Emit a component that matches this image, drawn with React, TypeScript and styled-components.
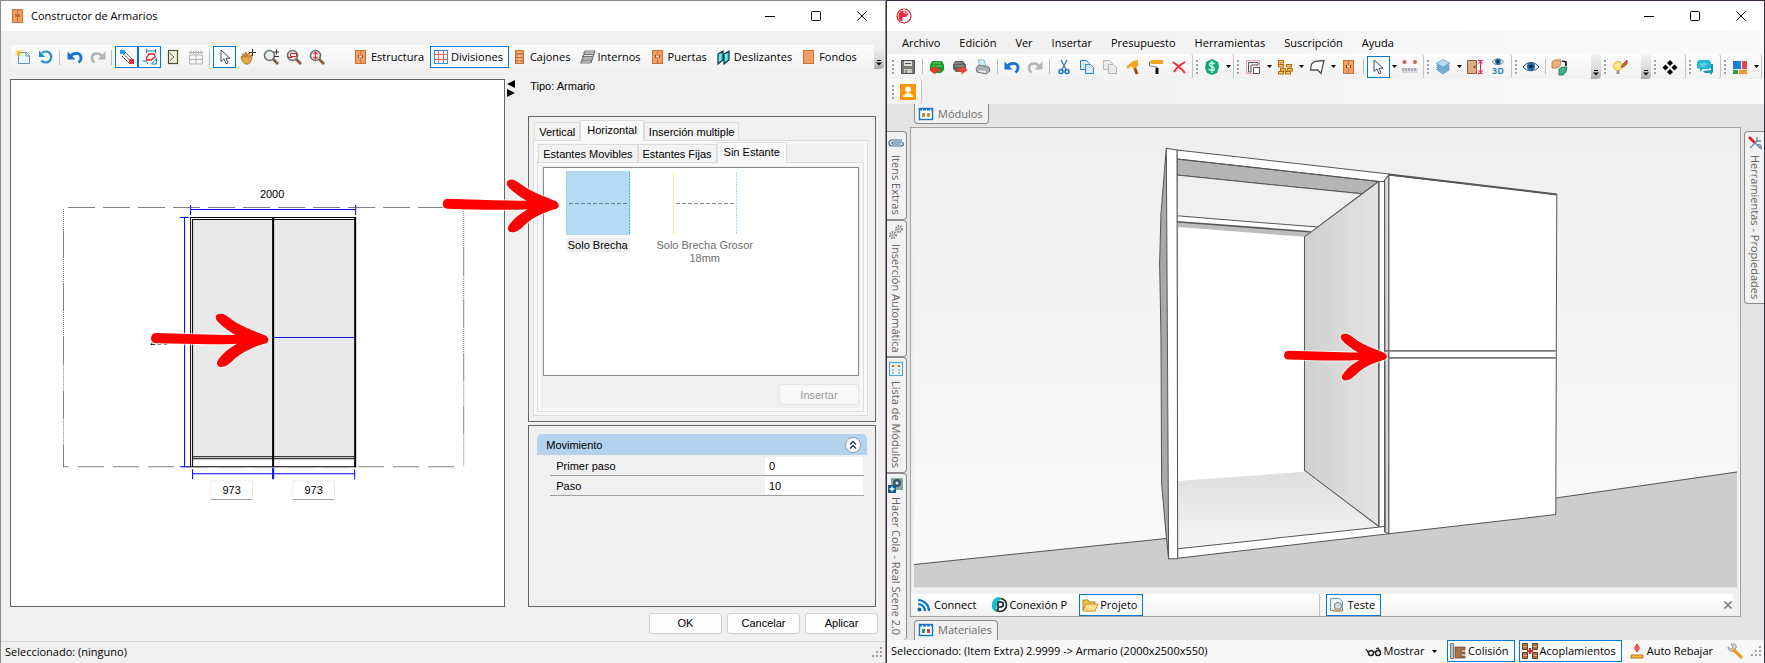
import React from 'react';
import styled, { createGlobalStyle, css } from 'styled-components';

const ui = '"Open Sans", "Noto Sans", sans-serif';
const classic = '"Liberation Sans", Arial, sans-serif';

const GlobalStyle = createGlobalStyle`
  * { box-sizing: border-box; }
  body { margin: 0; background: #f0f0f0; color: #000; font: 11px/14px ${ui}; }
  button, input { font: inherit; color: inherit; margin: 0; padding: 0; }
  svg { display: block; flex: none; }
`;

/* ---------- windows ---------- */

const Desktop = styled.div`
  display: flex;
  min-height: 100vh;
`;

const Window = styled.section<{ $grow: number; $edge: string }>`
  flex: ${(p) => p.$grow} 1 0;
  min-width: 0;
  display: flex;
  flex-direction: column;
  border: 1px solid ${(p) => p.$edge};
  background: #f0f0f0;
`;

const TitleBar = styled.header`
  display: flex;
  align-items: center;
  height: 30px;
  flex: none;
  padding-left: 11px;
  background: #fff;
`;

const Title = styled.h1`
  margin: 0 0 0 6px;
  flex: 1;
  font-size: 11px;
  font-weight: 400;
`;

const Caption = styled.button`
  width: 46px;
  height: 28px;
  border: 0;
  background: none;
  display: grid;
  place-items: center;
`;

const StatusBar = styled.footer`
  display: flex;
  align-items: center;
  height: 22px;
  flex: none;
  padding: 0 2px 0 4px;
`;

/* ---------- toolbars ---------- */

const toolButton = css<{ $on?: boolean }>`
  display: flex;
  align-items: center;
  height: 22px;
  border: 1px solid ${(p) => (p.$on ? '#0078d7' : 'transparent')};
  background: ${(p) => (p.$on ? '#fbfcfd' : 'none')};
`;

const IconButton = styled.button<{ $on?: boolean }>`
  ${toolButton}
  justify-content: center;
  width: 23px;
  flex: none;
`;

const TextButton = styled.button<{ $on?: boolean; $strong?: boolean }>`
  ${toolButton}
  gap: 2px;
  padding: 0 5px 0 2px;
  white-space: nowrap;
  font-weight: ${(p) => (p.$strong ? 500 : 400)};
`;

const CaretButton = styled.button`
  width: 9px;
  height: 22px;
  flex: none;
  border: 0;
  background: none;
  display: grid;
  place-items: center;
`;

const Separator = styled.span`
  width: 6px;
  height: 15px;
  flex: none;
  border-right: 1px solid #bdbdbd;
  margin-right: 3px;
  margin-left: -3px;
`;

const OverflowButton = styled.button`
  align-self: stretch;
  width: 10px;
  flex: none;
  margin-left: auto;
  border: 0;
  border-radius: 0 3px 4px 0;
  background: linear-gradient(#f4f4f4, #d9d9d9 60%, #a9a9a9);
  display: flex;
  align-items: flex-end;
  justify-content: center;
  padding-bottom: 3px;
`;

const BuilderToolbar = styled.nav`
  display: flex;
  align-items: center;
  height: 24px;
  flex: none;
  margin: 14px 1px 10px 10px;
  border-radius: 2px 4px 4px 2px;
  background: linear-gradient(#fcfcfc, #f2f2f2);
`;

const ToolGap = styled.span`
  width: 22px;
  flex: none;
`;

/* ---------- builder window ---------- */

const Workspace = styled.div`
  flex: 1;
  display: flex;
  padding: 0 8px 0 9px;
`;

const Canvas = styled.div`
  flex: 495 1 0;
  min-width: 0;
  border: 1px solid #646464;
  background: #fff;
  display: grid;
  place-items: center;
`;

const Plan = styled.svg`
  width: 100%;
  height: auto;
  font: 11px ${classic};
`;

const SizeInput = styled.input`
  width: 43px;
  height: 20px;
  display: block;
  border: 1px solid #e6e6e6;
  border-bottom-color: #868686;
  border-radius: 2px;
  background: #fff;
  text-align: center;
  font: 11px/16px ${classic};
`;

const Splitter = styled.div`
  width: 23px;
  flex: none;
  padding: 1px 0 0 2px;
`;

const Side = styled.div`
  flex: 350 1 0;
  min-width: 0;
  display: flex;
  flex-direction: column;
  font: 11px/14px ${classic};
`;

const TypeLabel = styled.div`
  height: 37px;
  padding-left: 2px;
`;

const Panel = styled.section<{ $fill?: boolean }>`
  margin: 0 1px 3px 0;
  border: 1px solid #646464;
  padding: ${(p) => (p.$fill ? '8px' : '3px 7px 5px 4px')};
  ${(p) => p.$fill && 'flex: 1; margin-bottom: 0;'}
`;

const Tabs = styled.div`
  display: flex;
  align-items: flex-end;
  height: 20px;
  padding-left: 1px;
`;

const Tab = styled.button<{ $on?: boolean }>`
  height: ${(p) => (p.$on ? 21 : 18)}px;
  margin-bottom: ${(p) => (p.$on ? -1 : 0)}px;
  padding: 0 ${(p) => (p.$on ? 6 : 4)}px ${(p) => (p.$on ? 3 : 0)}px;
  border: 1px solid #dcdcdc;
  border-bottom: 0;
  background: ${(p) => (p.$on ? '#f9f9f9' : '#f2f2f2')};
  white-space: nowrap;
  position: relative;
`;

const Page = styled.div<{ $inner?: boolean }>`
  border: 1px solid #dcdcdc;
  box-shadow: inset 0 0 0 3px #f9f9f9;
  padding: ${(p) => (p.$inner ? '4px 4px 6px 5px' : '1px 3px 3px')};
`;

const ListBox = styled.ul`
  list-style: none;
  margin: 0;
  padding: 3px 0 0;
  height: 209px;
  border: 1px solid #828790;
  background: #fff;
  display: flex;
`;

const Item = styled.li`
  width: 107px;
  position: relative;
  display: flex;
  flex-direction: column;
  align-items: center;
  gap: 3px;
  text-align: center;
`;

const ItemLabel = styled.span<{ $on?: boolean }>`
  padding: 1px 2px 0;
  line-height: 13px;
  background: ${(p) => (p.$on ? '#f0f0f0' : 'none')};
  color: ${(p) => (p.$on ? '#000' : '#6d6d6d')};
`;

const ItemArrow = styled.div`
  position: absolute;
  top: 8px;
  right: 91px;
  z-index: 2;
`;

const Footer = styled.div`
  display: flex;
  justify-content: flex-end;
  padding-top: 8px;
`;

const PushButton = styled.button<{ $wide?: boolean }>`
  width: ${(p) => (p.$wide ? 80 : 73)}px;
  height: 21px;
  border: 1px solid #d0d0d0;
  border-radius: 3px;
  background: #fdfdfd;
  &:disabled {
    color: #9a9a9a;
    border-color: #e6e6e6;
    background: #f8f8f8;
  }
`;

const GroupHeader = styled.div`
  display: flex;
  align-items: center;
  justify-content: space-between;
  height: 21px;
  margin-bottom: 1px;
  padding: 0 6px 0 9px;
  border-radius: 5px 5px 0 0;
  background: #b2d2ed;
`;

const Collapse = styled.button`
  width: 16px;
  height: 16px;
  border: 1px solid #8e99a8;
  border-radius: 50%;
  background: #fff;
  display: grid;
  place-items: center;
`;

const Property = styled.div`
  display: flex;
  align-items: center;
  justify-content: space-between;
  height: 20px;
  margin: 0 3px 0 13px;
  padding: 1px 1px 0 6px;
  border-bottom: 1px solid #a0a0a0;
`;

const PropertyInput = styled.input`
  width: 98px;
  height: 18px;
  border: 0;
  padding-left: 4px;
  background: #fff;
`;

const DialogFooter = styled.div`
  display: flex;
  justify-content: flex-end;
  gap: 5px;
  padding: 6px 7px 7px;
  font: 11px/14px ${classic};
`;

const BuilderStatus = styled(StatusBar)`
  border-top: 1px solid #d7d7d7;
`;

/* ---------- project window ---------- */

const MenuBar = styled.nav`
  display: flex;
  align-items: center;
  gap: 19px;
  height: 23px;
  flex: none;
  padding-left: 15px;
  background: linear-gradient(90deg, #f0f0f0, #fafafa);
  font-weight: 500;
`;

const MenuItem = styled.button`
  border: 0;
  background: none;
`;

const ToolRow = styled.div`
  display: flex;
  height: 25px;
  flex: none;
  padding-left: 2px;
  background: linear-gradient(90deg, #f0f0f0, #fafafa);
`;

const ToolGroup = styled.div<{ $trail?: number; $open?: boolean }>`
  display: flex;
  align-items: center;
  flex: none;
  padding-right: ${(p) => p.$trail ?? 1}px;
  border-right: ${(p) => (p.$open ? 0 : 1)}px solid #c4c4c4;
  border-radius: 0 3px 3px 0;
  background: linear-gradient(#fdfdfd, #f1f1f1);
`;

const Spacer = styled.span<{ $size: number }>`
  width: ${(p) => p.$size}px;
`;

const Dock = styled.div`
  flex: 1;
  display: flex;
  background: #e4e4e4;
`;

const Rail = styled.div<{ $right?: boolean }>`
  flex: none;
  display: flex;
  flex-direction: column;
  width: 23px;
  padding: 27px ${(p) => (p.$right ? '0 0 3px' : '2px 0 0')};
`;

const VerticalTab = styled.button<{ $last?: boolean; $right?: boolean }>`
  display: flex;
  flex-direction: column;
  align-items: center;
  gap: 4px;
  width: 20px;
  padding: 3px 0 4px;
  border: 1px solid #8c8c8c;
  ${(p) => (p.$right ? 'border-right: 0; border-radius: 4px 0 0 4px;' : 'border-left: 0; border-radius: 0 4px 4px 0;')}
  background: #f2f2f2;
  color: #666;
  overflow: hidden;
  ${(p) => p.$last && 'flex: 1 1 0; min-height: 0; justify-content: flex-start; border-bottom: 0;'}
`;

const VerticalText = styled.span`
  writing-mode: vertical-rl;
  white-space: nowrap;
  line-height: 16px;
`;

const Center = styled.div`
  flex: 1;
  min-width: 0;
  display: flex;
  flex-direction: column;
`;

const DockTab = styled.button<{ $bottom?: boolean }>`
  align-self: flex-start;
  display: flex;
  align-items: center;
  gap: 4px;
  height: 20px;
  margin-left: 4px;
  padding: 0 5px 0 3px;
  border: 1px solid #8c8c8c;
  ${(p) =>
    p.$bottom
      ? 'border-bottom: 0; border-radius: 4px 4px 0 0; margin-top: 3px;'
      : 'border-top: 0; border-radius: 0 0 4px 4px; margin-bottom: 3px;'}
  background: #f2f2f2;
  color: #6a6a6a;
`;

const Frame = styled.div`
  flex: 1;
  display: flex;
  flex-direction: column;
  border: 1px solid #a4a4a4;
  background: #f0f0f0;
`;

const Viewport = styled.div`
  flex: 1;
  display: flex;
  margin: 2px 3px 6px;
`;

const Scene = styled.svg`
  flex: 1;
  width: 100%;
  min-width: 0;
`;

const ViewTabs = styled.div`
  display: flex;
  align-items: center;
  height: 22px;
  padding-right: 7px;
  background: linear-gradient(90deg, #fff, #f0f0f0);
`;

const ViewGroup = styled.div<{ $end?: boolean }>`
  display: flex;
  align-items: center;
  gap: 6px;
  flex: 413 1 0;
  height: 22px;
  padding-left: ${(p) => (p.$end ? 6 : 2)}px;
  border-right: ${(p) => (p.$end ? 0 : 1)}px solid #c4c4c4;
  background: linear-gradient(#fff, #f1f1f1);
`;

const ProjectStatus = styled(StatusBar)`
  height: 23px;
  gap: 4px;
  background: #f7f7f7;
  font-weight: 500;
`;

const Grow = styled.span`
  flex: 1;
`;

/* ---------- drawings ---------- */

const G = ({ w = 16, h = 16, children }: { w?: number; h?: number; children: React.ReactNode }) => (
  <svg width={w} height={h} viewBox={`0 0 ${w} ${h}`} fill="none" overflow="visible" aria-hidden="true">
    {children}
  </svg>
);

const Minimize = () => <G w={10} h={10}><path d="M0 5.5h10" stroke="#000" /></G>;
const Maximize = () => <G w={10} h={10}><rect x="0.5" y="0.5" width="9" height="9" rx="1" stroke="#000" /></G>;
const CloseX = ({ s = 10, c = '#000' }) => <G w={s} h={s}><path d={`M0.5 0.5l${s - 1} ${s - 1}M${s - 0.5} 0.5l${1 - s} ${s - 1}`} stroke={c} strokeWidth={s < 10 ? 1.6 : 1} /></G>;
const Caret = () => <G w={5} h={3}><path d="M0 0h5L2.5 3z" fill="#000" /></G>;
const More = () => <G w={6} h={6}><path d="M1 0.5h4" stroke="#000" /><path d="M0 2.5h6L3 5.5z" fill="#000" /></G>;
const Grip = () => <G w={8} h={16}><path d="M4 1v14" stroke="#a2a2a2" strokeWidth="2" strokeDasharray="2 2" /></G>;
const SizeGrip = () => (
  <G w={12} h={12}>
    <path d="M9 2h2M9 6h2M9 10h2M5 6h2M5 10h2M1 10h2" stroke="#a0a0a0" strokeWidth="2" />
  </G>
);

const Closet = () => (
  <G>
    <rect x="2.5" y="1.5" width="10" height="13" fill="#f29d63" stroke="#c47334" />
    <path d="M7.5 2v12" stroke="#c47334" /><path d="M5.5 6v3M9.5 6v3" stroke="#8f4d1c" /><path d="M6.5 7.500h2" stroke="#fff" strokeWidth="1.500" />
  </G>
);
const Drawers = () => (
  <G>
    <rect x="3.5" y="1.5" width="8" height="13" fill="#f29d63" stroke="#c47334" />
    <path d="M3 5h9M3 8.5h9M3 12h9" stroke="#b4652a" /><path d="M6.500 3.500h2M6.500 7h2M6.500 10h2M6.500 13h2" stroke="#fff" />
  </G>
);
const BackPanel = () => <G><rect x="2.5" y="1.5" width="10" height="13" fill="#f29d63" stroke="#c47334" /></G>;
const Shelves = () => (
  <G>
    <path d="M5 2L1 14M15 2L11 14" stroke="#777" />
    {[2, 5.5, 9, 12].map((y, i) => <path key={y} d={`M${5 - i} ${y}h10l-1.500 2h-10z`} fill="#ececec" stroke="#555" strokeWidth="0.8" />)}
  </G>
);
const Sliding = () => (
  <G>
    <path d="M2 5l5-3v9l-5 4zM8 5l5-3v9l-5 4z" fill="#35d3e2" stroke="#17373d" strokeWidth="1.200" />
    <path d="M4 5v7M10 5v7" stroke="#c9f6fb" />
  </G>
);
const GridIcon = () => (
  <G>
    <rect x="1.500" y="1.500" width="13" height="13" fill="#fff" stroke="#2a9bd8" />
    <path d="M5.500 2v12M10.500 2v12M2 5.500h12M2 10.500h12" stroke="#ef5a5a" />
  </G>
);
const NewDoc = () => (
  <G>
    <path d="M3.500 3.500h8l3 3v8h-11z" fill="#eaf5fd" stroke="#5b93bd" /><path d="M11 3.500v3.500h3.500" stroke="#5b93bd" />
    <path d="M4 0.500v7M0.500 4h7M1.500 1.500l5 5M6.500 1.500l-5 5" stroke="#f0c000" />
  </G>
);
const Refresh = () => (
  <G><path d="M4 4A5.500 5.500 0 1 1 3.500 11.500" stroke="#1b8fd8" strokeWidth="2.200" /><path d="M1 1.500v6.500h6z" fill="#1b8fd8" /></G>
);
const Undo = ({ c = '#1474cf' }) => (
  <G><path d="M3 8C6 3.500 13 3 14 8c0.300 2.300-0.500 4-2.500 5.500" stroke={c} strokeWidth="2.800" /><path d="M0.500 2.500v8h8z" fill={c} /></G>
);
const Redo = () => (
  <G><path d="M13 8C10 3.500 3 3 2 8c-0.300 2.300 0.500 4 2.500 5.500" stroke="#b4b4b4" strokeWidth="2.600" /><path d="M15.500 2.500v8h-8z" fill="#b4b4b4" /></G>
);
const Snap = () => (
  <G>
    <path d="M6 3l8 8M4.500 5l8 8M3 7l7 7" stroke="#222" strokeDasharray="2 1" />
    <rect x="1" y="1" width="5" height="4" fill="#18a5ee" /><rect x="10" y="10" width="5" height="5" fill="#e33" />
  </G>
);
const Shapes = () => (
  <G>
    <path d="M4.500 0v4M13.500 0v4M4.500 2h9" stroke="#1878c8" /><path d="M7 5h5l1 3-4 3H4.500l0-2z" stroke="#ee1c24" strokeWidth="1.300" />
    <path d="M0.500 12h3c2 0 2 3 2 3M14.500 9.500v5.500h-5z" stroke="#1878c8" />
  </G>
);
const Turn = () => <G><rect x="3.500" y="1.500" width="9" height="13" stroke="#4b5320" strokeWidth="1.200" fill="#f4f5e6" /><path d="M4.500 4l4.500 4-4.500 4" stroke="#4b5320" /></G>;
const Table = () => <G><path d="M0.500 3.500h15M1.500 6v9h13V6zM8 1v14M1.500 10.500h13M3 1v4M5.500 2v3M10.500 2v3M13 1v4" stroke="#b3b3b3" /></G>;
const Cursor = () => <G><path d="M4 1v11.500l3-2.700 2 5 2-0.900-2-4.700h4z" fill="#fff" stroke="#3e4c66" /></G>;
const Hand = () => (
  <G>
    <path d="M1 8c0-1 1.500-1 2 1L2.500 5.500c0-1 1.300-1 1.500 0L5 8V4c0-1 1.500-1 1.500 0l0.500 4L8 4.500c0.200-1 1.500-0.600 1.300 0.500L9 9l2-3c1-0.700 1.700 0.200 1.200 1L11 12c-1 2.500-3 3.500-5 3-2.500-0.500-4-3-5-7z" fill="#e7a84b" stroke="#a2621b" strokeWidth="0.800" />
    <path d="M12.500 0v7M9 3.500h7" stroke="#333" />
  </G>
);
const Lens = ({ children }: { children: React.ReactNode }) => (
  <G>
    <path d="M10 10l5 5" stroke="#8a5a38" strokeWidth="2.600" /><circle cx="6.500" cy="6.500" r="5" fill="#e6eff1" stroke="#6f6f6f" strokeWidth="1.600" />
    {children}
  </G>
);
const BoxRed = () => (
  <G>
    <path d="M1 6l2-4h8l3 4v4l-3 3H4l-3-3z" fill="#5b6060" /><path d="M3 4h7M3 7h9" stroke="#a8a8a8" /><path d="M5 11h5" stroke="#f0432c" strokeWidth="3" /><path d="M9.500 6.500l6 4.500-6 4.500z" fill="#f0432c" />
  </G>
);
const BoxGreen = () => (
  <G>
    <path d="M1 6l2-4h10l2 4v5l-3 3H4l-3-3z" fill="#19972b" /><path d="M4 4h8M3 7h10" stroke="#5fdc62" /><path d="M6 11h5" stroke="#f0332c" strokeWidth="3" /><path d="M6.500 6.500l-6 4.500 6 4.500z" fill="#f0332c" />
  </G>
);
const Save = () => (
  <G>
    <path d="M1.500 1.500h13v13h-13z" fill="#7d7d78" stroke="#4c4c48" /><path d="M4 2h8v5H4z" fill="#dcdcd6" /><path d="M4 10h8v4H4z" fill="#c9c9c2" /><path d="M6 11v3M5 4.500h6" stroke="#555" />
  </G>
);
const Printer = () => (
  <G>
    <path d="M3 1h6l2 6H5z" fill="#d4eaf8" stroke="#8fb3c7" /><path d="M1 9l3-3 10 2 1 4-4 3-9-2z" fill="#aab3b8" stroke="#6f7b82" /><path d="M4 12l7 1" stroke="#eee" strokeWidth="1.500" />
  </G>
);
const Cut = () => (
  <G><path d="M5 1l5 9.500M11 1L6 10.500" stroke="#4f7f9f" strokeWidth="1.500" /><circle cx="5" cy="12.500" r="2" stroke="#1474cf" strokeWidth="1.500" /><circle cx="11" cy="12.500" r="2" stroke="#1474cf" strokeWidth="1.500" /></G>
);
const Copy = ({ c = '#2e86cf', f = '#d7ecfb' }) => (
  <G><path d="M1.500 1.500h6l3 3v6h-9z" fill={f} stroke={c} /><path d="M6.500 5.500h5l3 3v6h-8z" fill={f} stroke={c} /></G>
);
const Hammer = () => <G><path d="M9 7l3 8" stroke="#9a4b14" strokeWidth="3" /><path d="M1 8l7-6 5-1v6l-4 3-3-3-3 3z" fill="#f4a51c" /></G>;
const Roller = () => <G><path d="M3 1h12v4H3z" fill="#f4a51c" /><path d="M3 3H1.500v4L9 8v2" stroke="#777" /><path d="M9 9v6" stroke="#111" strokeWidth="3" /></G>;
const Delete = () => <G><path d="M2 3c4 3 8 6 12 11M14 3C9 6 5 9 3 13" stroke="#f02a2a" strokeWidth="2" /></G>;
const Dollar = () => (
  <G><path d="M8 0l6 3 1 5-2 6-5 2-5-2-2-5 1-6z" fill="#17a673" /><path d="M11 5C8 3 5 4 5.500 6c0.500 2 5 1.500 5 4 0 2-4 2-6 0M8 2v12" stroke="#c9ffe9" strokeWidth="1.400" /></G>
);
const Wall = () => <G><path d="M1.500 1.500h13v13h-13z" stroke="#f0a0a0" /><path d="M3.500 13V3.500h9.500V6H6v7zM8.500 8.500h6v6h-6z" stroke="#555" fill="#fff" /></G>;
const Bricks = () => (
  <G>
    {[[1, 1], [1, 5], [9, 5], [3, 9], [10, 9], [1, 12], [8, 12]].map(([x, y]) => (
      <rect key={`${x}-${y}`} x={x + 0.5} y={y + 0.5} width="5" height="2.500" fill="#ffc66b" stroke="#b9690b" />
    ))}
  </G>
);
const Poly = () => <G><path d="M6 2.500l9-1-3 13L9 11H1.500l1-6z" stroke="#555" strokeWidth="1.300" fill="#fff" /></G>;
const Ruler = () => <G><path d="M0 9h16v5H0z" fill="#d8d8e0" /><path d="M1 9v3M4 9v3M7 9v3M10 9v3M13 9v3" stroke="#77808c" /><circle cx="2.500" cy="3" r="2" fill="#d35b5b" /><circle cx="13" cy="3" r="2" fill="#d35b5b" /></G>;
const Layers = () => (
  <G>
    {[12, 10, 8, 6].map((y) => <path key={y} d={`M1.500 ${y - 1.500}l6.500 -3 6.500 3-6.500 4.500z`} fill="#8dbfdd" stroke="#4d8fb8" strokeWidth="0.800" />)}
    <path d="M1.500 4L8 0.500l6.500 3.500L8 8z" fill="#b9dcf0" stroke="#6aa9cd" strokeWidth="0.800" />
  </G>
);
const Door = () => <G><path d="M0.500 1.500h9v13h-9z" fill="#dcae86" stroke="#8a5a38" /><circle cx="7.500" cy="8" r="1" fill="#5c3517" /><path d="M11 1.500h5M11 14.500h5M13.500 2v12M11.500 5l2-3 2 3M11.500 11l2 3 2-3" stroke="#ee2357" /></G>;
const EyeShape = ({ y = 8, s = 1 }) => (
  <g transform={`translate(8 ${y}) scale(${s})`}>
    <path d="M-8 0C-4-6 4-6 8 0 4 5-4 5-8 0z" fill="#eaf6fb" stroke="#27506e" /><circle cy="-0.500" r="4" fill="#1d6ba5" /><circle cy="-0.500" r="1.800" fill="#061a2c" />
  </g>
);
const View3D = () => <G><EyeShape y={3} s={0.700} /><text x="8" y="15" textAnchor="middle" fontSize="9" fontWeight="700" fill="#2b8fb5">3D</text></G>;
const Cubes = () => <G><path d="M0 3l3-2h6l-1 6-3 2H0z" fill="#efb27c" stroke="#a5683a" strokeWidth="0.800" /><path d="M7 10l3-2h5l-1 5-3 3H7z" fill="#43b08c" stroke="#1d6a51" strokeWidth="0.800" /><path d="M10 2l4 1v4" stroke="#222" strokeWidth="1.800" /></G>;
const Bulb = () => <G><circle cx="6" cy="7" r="4.500" fill="#ffe889" stroke="#e6ad2c" /><path d="M4.500 11.500h3V15h-3z" fill="#9a9a9a" /><path d="M9 8l3-4 3-3v4l-4 3z" fill="#d8661c" stroke="#8e3a0b" strokeWidth="0.800" /></G>;
const Diamonds = () => <G>{['M8 1', 'M3.500 5.500', 'M12.500 5.500', 'M8 10'].map((m) => <path key={m} d={`${m}l3 3-3 3-3-3z`} fill="#000" />)}</G>;
const Chat = () => <G><path d="M2 1h10l2 2v6l-2 1H6l-3 3v-3L0 9V3z" fill="#20b9d6" /><path d="M6 12l8-1V5h2v8l-1 1v2l-2-2H8z" fill="#1398b4" /><path d="M3 5h7M3 7h5" stroke="#9fe9f5" /></G>;
const Mosaic = () => <G><path d="M1 2h8v8H1z" fill="#1b7fd4" /><path d="M10 2h5v8h-5z" fill="#e84855" /><path d="M1 11h5v4H1z" fill="#25a244" /><path d="M7 11h8v4H7z" fill="#f29a27" /></G>;
const User = () => <G><path d="M0 0h16v16H0z" fill="#ff9800" /><circle cx="8" cy="5.500" r="3" fill="#fff" /><path d="M3 13c0-5 10-5 10 0z" fill="#fff" /></G>;
const AppLogo = () => <G><circle cx="6" cy="8" r="7" fill="#fff" stroke="#e6192e" strokeWidth="1.200" /><path d="M6 2.500a5.500 5.500 0 0 0-1.500 10.800V9H7c4 0 4-6-1-6.500z" fill="#f0283c" /><path d="M6 1v4h3" stroke="#fff" /></G>;
const ModulePane = ({ a = '#b58b4a', b = '#b58b4a' }) => <G><rect x="1.500" y="2.500" width="13" height="11" fill="#fff" stroke="#1474cf" strokeWidth="1.400" /><path d="M1 3.500h14" stroke="#1474cf" strokeWidth="2" strokeDasharray="3 1" /><path d="M4 7h3v4H4z" fill={a} /><path d="M9 7h3v4H9z" fill={b} /></G>;
const ListPane = () => <G><rect x="1.500" y="1.500" width="13" height="13" fill="#f2faff" stroke="#4f9fd6" /><path d="M4 5h2M10 5h2" stroke="#a9762f" strokeWidth="2" /><path d="M5 8v5M11 8v5" stroke="#6fb7e6" strokeDasharray="2 1" strokeWidth="1.500" /></G>;
const Clip = () => <G><path d="M14 5H4C0 5 0 11 4 11h9c3 0 3-4 0-4H5c-1.500 0-1.500 2 0 2h8" stroke="#3b6b8c" strokeWidth="1.200" /></G>;
const Gears = () => <G><circle cx="5" cy="11" r="3" stroke="#888" strokeWidth="2" strokeDasharray="1.500 1" /><circle cx="11" cy="5" r="3" stroke="#888" strokeWidth="2" strokeDasharray="1.500 1" /><circle cx="5" cy="11" r="1.200" stroke="#999" /><circle cx="11" cy="5" r="1.200" stroke="#999" /></G>;
const Camera = () => <G><path d="M3 1h12v12H3z" fill="#8fa3a3" /><circle cx="9" cy="6" r="4" fill="#39566b" /><circle cx="9" cy="6" r="1.500" fill="#dfe9ee" /><path d="M0 8h8v8H0z" fill="#0c5c96" /><path d="M4 9.500v5M1.500 12h5" stroke="#fff" strokeWidth="1.300" /></G>;
const Tools = () => <G><path d="M2 2l6 6" stroke="#dd2222" strokeWidth="2.600" /><path d="M8 8l6 6" stroke="#7c8b9a" strokeWidth="1.400" /><path d="M3 13l8-8M10 2v4h4M10 10c4-1 5 2 4 4" stroke="#5d8fb5" strokeWidth="1.400" /></G>;
const Feed = () => <G><circle cx="3.500" cy="12.500" r="2" fill="#0b66b8" /><path d="M2 7a7 7 0 0 1 7 7M2 3a11 11 0 0 1 11 11" stroke="#0b76d0" strokeWidth="2.200" /></G>;
const PLogo = () => <G><circle cx="9" cy="8" r="6.500" fill="#fff" stroke="#222" strokeWidth="1.600" /><path d="M8 0a8 8 0 0 0-3 15L6 8l4-7z" fill="#18bcd0" /><path d="M7 13V5h3c3 0 3 5 0 5H8" stroke="#111" strokeWidth="1.500" /></G>;
const Folder = () => <G><path d="M1 3h5l1 2h6v8H1z" fill="#f0c04a" stroke="#b9851d" /><path d="M4 7h12l-3 7H1z" fill="#ffe08a" stroke="#c99426" /></G>;
const Preview = () => <G><path d="M1.500 1.500h9l3 3v9h-12z" fill="#eef7fd" stroke="#5b9bd0" /><circle cx="9" cy="9" r="3.500" fill="#cfe2ee" stroke="#777" /><path d="M3 13l4-2 8 2-2 2H5z" fill="#b9a98d" /></G>;
const Glasses = () => <G><circle cx="5" cy="10" r="2.500" stroke="#222" strokeWidth="1.400" /><circle cx="12" cy="10" r="2.500" stroke="#222" strokeWidth="1.400" /><path d="M7 9h3M2.500 10L0 6M14 8l-2-3-2 1" stroke="#222" strokeWidth="1.300" /></G>;
const Collision = () => <G><path d="M0.500 0.500h3v15h-3z" fill="#b9c3cb" stroke="#75818b" /><path d="M5 4h10v3h-4v2h4v2h-4v2h4v2H5z" fill="#a9714c" stroke="#744623" strokeWidth="0.800" /></G>;
const Joint = () => <G><path d="M0.500 0.500h5v6h-5zM10.500 0.500h5v6h-5zM0.500 9.500h5v6h-5zM10.500 9.500h5v6h-5z" fill="#a9714c" stroke="#6b3d1c" /><path d="M1 3.500h4M11 3.500h4M1 12.500h4M11 12.500h4" stroke="#d9a983" /><path d="M8 5v6M5 8h6" stroke="#e52020" strokeWidth="2" /></G>;
const Lower = () => <G><path d="M8 1v8M5.500 5L8 9l2.500-4L8 1z" stroke="#e33" fill="#ef8a8a" /><path d="M2 12h12v3H2z" fill="#ffb83a" stroke="#b3741a" /></G>;
const Wrench = () => <G><path d="M1 4l3 2 2-2-2-3c4-1 6 1 5 4L6 8C3 9 1 7 1 4z" fill="#cfd6db" stroke="#808a92" strokeWidth="0.800" /><path d="M7 7l7 7" stroke="#f0a020" strokeWidth="3.400" strokeLinecap="round" /></G>;

const arrowPath =
  'M14 60C90 62 180 66 254 66C235 55 210 38 197 22C188 6 200 0 214 2C228 6 240 20 262 32C285 45 320 58 340 66C356 74 356 88 340 92C310 100 275 115 250 138C235 152 225 162 210 162C196 160 194 148 204 136C220 115 240 102 258 92C180 96 90 92 14 90C-5 90-5 62 14 60Z';

const ArrowShape = () => (
  <>
    <path d={arrowPath} fill="none" stroke="#fff" strokeOpacity="0.6" strokeWidth="8" />
    <path d={arrowPath} fill="#f00" />
  </>
);

const PlanDrawing = () => (
  <Plan viewBox="11 80 493 525">
    <g stroke="#808080">
      <path d="M68 207.500H463" strokeDasharray="27 8" />
      <path d="M63.500 466.500h5M78 466.500H456" strokeDasharray="26 9" />
      <path d="M63.500 209V230M463.500 211V247M63.500 257V284M463.500 275V300M63.500 310V337M463.500 327V353M63.500 364V391M463.500 380V406M63.500 418V444M463.500 433V466" strokeDasharray="1 1" />
      <path d="M63.500 230v27M63.500 284v26M63.500 337v27M63.500 391v27M63.500 444v23M463.500 247v28M463.500 300v27M463.500 353v27M463.500 406v27" />
    </g>
    <path d="M190 217h166v250H190z" fill="#fff" />
    <path d="M193 220h161v236H193z" fill="#e9e9e9" />
    <g stroke="#000">
      <path d="M190 217.500h166M192 219.500h163M190.500 217v250M192.500 219v248M190 466.500h166M193 456.500h161M193 458.500h161" />
      <path d="M273 217v250M355 217v250" strokeWidth="2" />
    </g>
    <g stroke="#0000ff">
      <path d="M190 209.500h166M190.500 205v10M355.500 205v10M184.500 217v249M180 217.500h9M180 466.500h10" />
      <path d="M192 473.500h163M192.500 469v10M354.500 469v10" /><path d="M273 468v11" strokeWidth="2" />
      <path d="M274 337.500h80" stroke="#1010d8" />
    </g>
    <text x="272" y="198" textAnchor="middle">2000</text>
    <text x="150" y="345">250</text>
    <foreignObject x="210" y="480" width="43" height="20"><SizeInput aria-label="Ancho izquierdo" defaultValue="973" /></foreignObject>
    <foreignObject x="292" y="480" width="43" height="20"><SizeInput aria-label="Ancho derecho" defaultValue="973" /></foreignObject>
    <g transform="translate(151 313) scale(0.3333)"><ArrowShape /></g>
  </Plan>
);

const WardrobeScene = () => (
  <Scene viewBox="914 130 822 457" preserveAspectRatio="xMidYMid slice">
    <defs>
      <linearGradient id="wall" x1="0" y1="0" x2="0" y2="1"><stop offset="0" stopColor="#efefef" /><stop offset="1" stopColor="#fafafa" /></linearGradient>
      <linearGradient id="side" x1="0" y1="0" x2="1" y2="0"><stop offset="0" stopColor="#cfcfcf" /><stop offset="1" stopColor="#e4e4e4" /></linearGradient>
      <linearGradient id="base" x1="0" y1="0" x2="0" y2="1"><stop offset="0" stopColor="#dedede" /><stop offset="1" stopColor="#f6f6f6" /></linearGradient>
    </defs>
    <path d="M914 130h822v457H914z" fill="url(#wall)" />
    <path d="M914 564L1166 538 1555 497.500 1736 471.500V587H914z" fill="#cdcdcd" />
    <path d="M914 564L1166 538M1555 497.500L1736 471.500" stroke="#555" />
    <g transform="translate(1130 130) scale(0.33333)" strokeWidth="3" stroke="#555" fill="#fff" strokeLinejoin="round">
      <path d="M108 55L92 250 88 400 92 620 94 1060 108 1220 115 1285 120 600z" fill="#a9a9a9" />
      <path d="M140 60L775 132V1210L142 1283z" />
      <path d="M140 87L745 154 695 191 140 135z" fill="#b5b5b5" />
      <path d="M140 135L695 191 562 291 140 257z" fill="#f0f0f0" />
      <path d="M140 275L540 305 522 320 140 291z" fill="#bdbdbd" stroke="none" />
      <path d="M140 275L540 305" strokeWidth="5" />
      <path d="M142 1052L522 1024 745 1188 142 1255z" fill="url(#base)" stroke="none" />
      <path d="M522 320L745 154V1188L522 1020z" fill="url(#side)" />
      <path d="M142 1255L762 1188M140 87L745 154H762" fill="none" />
      <path d="M745 154V1188M762 150V1205" />
      <path d="M762 150L775 134V1210L764 1205z" fill="#d9d9d9" />
      <path d="M775 135L1278 193 1275 1152 775 1210z" />
      <path d="M775 133L1278 193" strokeWidth="6" />
      <path d="M762 662H1275M775 683H1275" strokeWidth="5" stroke="#777" />
      <path d="M108 55L140 60 142 1285H115z" />
      <g transform="translate(461 609) scale(0.875)" stroke="none"><ArrowShape /></g>
    </g>
  </Scene>
);

const Thumb = ({ on }: { on?: boolean }) => (
  <svg width="64" height="64" viewBox="0 0 64 64" aria-hidden="true">
    {on && <path d="M0 0h64v64H0z" fill="#b3dcf4" />}
    <path d="M0.500 1v63" stroke={on ? '#a9cfae' : '#ffe96b'} strokeDasharray="2 1" />
    <path d="M63.500 1v63" stroke={on ? '#35b6e6' : '#8fe3f5'} strokeDasharray="2 1" />
    <path d="M3 32.500h58" stroke={on ? '#5c7f9d' : '#8a8a8a'} strokeDasharray="4 2" />
  </svg>
);

/* ---------- page ---------- */

const Captions = () => (
  <>
    <Caption aria-label="Minimizar"><Minimize /></Caption>
    <Caption aria-label="Maximizar"><Maximize /></Caption>
    <Caption aria-label="Cerrar"><CloseX /></Caption>
  </>
);

const Tool = ({ name, on, children }: { name: string; on?: boolean; children: React.ReactNode }) => (
  <IconButton aria-label={name} $on={on}>{children}</IconButton>
);

const Drop = ({ name }: { name: string }) => <CaretButton aria-label={name}><Caret /></CaretButton>;

const modes: [string, React.ReactNode][] = [
  ['Estructura', <Closet />],
  ['Divisiones', <GridIcon />],
  ['Cajones', <Drawers />],
  ['Internos', <Shelves />],
  ['Puertas', <Closet />],
  ['Deslizantes', <Sliding />],
  ['Fondos', <BackPanel />],
];

const menus = ['Archivo', 'Edición', 'Ver', 'Insertar', 'Presupuesto', 'Herramientas', 'Suscripción', 'Ayuda'];

const BuilderWindow = () => (
  <Window $grow={886} $edge="#8a8a8a">
    <TitleBar>
      <G w={13} h={16}><rect x="0.500" y="1.500" width="10" height="13" fill="#f29d63" stroke="#c47334" /><path d="M5.500 2v12" stroke="#c47334" /><path d="M4 6v3M7 6v3" stroke="#7a4a20" /></G>
      <Title>Constructor de Armarios</Title>
      <Captions />
    </TitleBar>
    <BuilderToolbar>
      <Tool name="Nuevo"><NewDoc /></Tool>
      <Tool name="Actualizar"><Refresh /></Tool>
      <Separator />
      <Tool name="Deshacer"><Undo /></Tool>
      <Tool name="Rehacer"><Redo /></Tool>
      <Separator />
      <Tool name="Ajustar" on><Snap /></Tool>
      <Tool name="Formas" on><Shapes /></Tool>
      <Tool name="Abrir"><Turn /></Tool>
      <Tool name="Tabla"><Table /></Tool>
      <Separator />
      <Tool name="Seleccionar" on><Cursor /></Tool>
      <Tool name="Mover"><Hand /></Tool>
      <Tool name="Zoom"><Lens><path d="M11 3h5M13.500 0.500v5M11 7.500h5" stroke="#333" /></Lens></Tool>
      <Tool name="Zoom de ventana"><Lens><path d="M4.500 4.500h6v3h-6zM2 8.500h4" stroke="#c22" /></Lens></Tool>
      <Tool name="Zoom completo"><Lens><path d="M6.500 3v7M4.500 5l2-2 2 2M4.500 8l2 2 2-2" stroke="#e33" strokeWidth="1.200" /></Lens></Tool>
      <ToolGap />
      {modes.map(([name, icon]) => (
        <TextButton key={name} $on={name === 'Divisiones'}>{icon}{name}</TextButton>
      ))}
      <OverflowButton aria-label="Más"><More /></OverflowButton>
    </BuilderToolbar>
    <Workspace>
      <Canvas><PlanDrawing /></Canvas>
      <Splitter>
        <G w={8} h={20}><path d="M8 0v8L0 4zM0 9v8l8-4z" fill="#000" /></G>
      </Splitter>
      <Side>
        <TypeLabel>Tipo: Armario</TypeLabel>
        <Panel>
          <Tabs>
            <Tab>Vertical</Tab>
            <Tab $on>Horizontal</Tab>
            <Tab>Inserción multiple</Tab>
          </Tabs>
          <Page>
            <Tabs>
              <Tab>Estantes Movibles</Tab>
              <Tab>Estantes Fijas</Tab>
              <Tab $on>Sin Estante</Tab>
            </Tabs>
            <Page $inner>
              <ListBox>
                <Item>
                  <Thumb on />
                  <ItemLabel $on>Solo Brecha</ItemLabel>
                  <ItemArrow><svg width="118" height="54" viewBox="0 0 353 164" overflow="visible"><ArrowShape /></svg></ItemArrow>
                </Item>
                <Item>
                  <Thumb />
                  <ItemLabel>Solo Brecha Grosor 18mm</ItemLabel>
                </Item>
              </ListBox>
              <Footer><PushButton $wide disabled>Insertar</PushButton></Footer>
            </Page>
          </Page>
        </Panel>
        <Panel $fill>
          <GroupHeader>
            Movimiento
            <Collapse aria-label="Contraer"><G w={8} h={10}><path d="M1 4.500l3-3 3 3M1 8.500l3-3 3 3" stroke="#1d2f6f" strokeWidth="1.300" /></G></Collapse>
          </GroupHeader>
          <Property>
            <label htmlFor="first-step">Primer paso</label>
            <PropertyInput id="first-step" defaultValue="0" />
          </Property>
          <Property>
            <label htmlFor="step">Paso</label>
            <PropertyInput id="step" defaultValue="10" />
          </Property>
        </Panel>
      </Side>
    </Workspace>
    <DialogFooter>
      <PushButton>OK</PushButton>
      <PushButton>Cancelar</PushButton>
      <PushButton>Aplicar</PushButton>
    </DialogFooter>
    <BuilderStatus>Seleccionado: (ninguno)<Grow /><SizeGrip /></BuilderStatus>
  </Window>
);

const ProjectWindow = () => (
  <Window $grow={879} $edge="#3c2848">
    <TitleBar>
      <Grow><AppLogo /></Grow>
      <Captions />
    </TitleBar>
    <MenuBar>{menus.map((m) => <MenuItem key={m}>{m}</MenuItem>)}</MenuBar>
    <ToolRow>
      <ToolGroup>
        <Grip />
        <Tool name="Guardar"><Save /></Tool>
        <Separator />
        <Tool name="Importar"><BoxGreen /></Tool>
        <Tool name="Exportar"><BoxRed /></Tool>
        <Tool name="Imprimir"><Printer /></Tool>
        <Separator />
        <Tool name="Deshacer"><Undo /></Tool>
        <Tool name="Rehacer"><Redo /></Tool>
        <Separator />
        <Tool name="Cortar"><Cut /></Tool>
        <Tool name="Copiar"><Copy /></Tool>
        <Tool name="Pegar"><Copy c="#b5b5b5" f="#ececec" /></Tool>
        <Tool name="Martillo"><Hammer /></Tool>
        <Tool name="Pintar"><Roller /></Tool>
        <Tool name="Eliminar"><Delete /></Tool>
      </ToolGroup>
      <ToolGroup $trail={0}>
        <Grip /><Tool name="Precios"><Dollar /></Tool><Drop name="Opciones de precios" />
      </ToolGroup>
      <ToolGroup>
        <Grip />
        <Tool name="Pared"><Wall /></Tool><Drop name="Opciones de pared" />
        <Tool name="Ladrillos"><Bricks /></Tool><Drop name="Opciones de ladrillos" />
        <Tool name="Polígono"><Poly /></Tool><Drop name="Opciones de polígono" />
        <Tool name="Armario"><Closet /></Tool>
        <Separator />
        <Tool name="Seleccionar" on><Cursor /></Tool><Drop name="Opciones de selección" />
        <Tool name="Medir"><Ruler /></Tool>
      </ToolGroup>
      <ToolGroup>
        <Grip />
        <Tool name="Capas"><Layers /></Tool><Drop name="Opciones de capas" />
        <Tool name="Puerta"><Door /></Tool>
        <Tool name="Vista 3D"><View3D /></Tool>
      </ToolGroup>
      <ToolGroup $trail={0} $open>
        <Grip />
        <Tool name="Ver"><G><EyeShape /></G></Tool>
        <Separator />
        <Tool name="Bloques"><Cubes /></Tool>
        <Spacer $size={19} />
        <OverflowButton aria-label="Más vistas"><More /></OverflowButton>
      </ToolGroup>
      <ToolGroup $trail={0} $open>
        <Grip /><Tool name="Luz"><Bulb /></Tool><Spacer $size={9} />
        <OverflowButton aria-label="Más luces"><More /></OverflowButton>
      </ToolGroup>
      <ToolGroup $trail={3}><Grip /><Tool name="Mosaico"><Diamonds /></Tool></ToolGroup>
      <ToolGroup $trail={3}><Grip /><Tool name="Mensajes"><Chat /></Tool></ToolGroup>
      <ToolGroup $trail={0}><Grip /><Tool name="Diseño"><Mosaic /></Tool><Drop name="Opciones de diseño" /></ToolGroup>
    </ToolRow>
    <ToolRow>
      <ToolGroup><Grip /><Tool name="Usuario"><User /></Tool></ToolGroup>
    </ToolRow>
    <Dock>
      <Rail>
        <VerticalTab><Clip /><VerticalText>Itens Extras</VerticalText></VerticalTab>
        <VerticalTab><Gears /><VerticalText>Inserción Automática</VerticalText></VerticalTab>
        <VerticalTab><ListPane /><VerticalText>Lista de Módulos</VerticalText></VerticalTab>
        <VerticalTab $last><Camera /><VerticalText>Hacer Cola - Real Scene 2.0</VerticalText></VerticalTab>
      </Rail>
      <Center>
        <DockTab><ModulePane />Módulos</DockTab>
        <Frame>
          <Viewport><WardrobeScene /></Viewport>
          <ViewTabs>
            <ViewGroup>
              <TextButton $strong><Feed />Connect</TextButton>
              <TextButton $strong><PLogo />Conexión P</TextButton>
              <TextButton $strong $on><Folder />Projeto</TextButton>
            </ViewGroup>
            <ViewGroup $end>
              <TextButton $strong $on><Preview />Teste</TextButton>
              <Grow />
              <CaretButton aria-label="Cerrar vista"><CloseX s={8} c="#777" /></CaretButton>
            </ViewGroup>
          </ViewTabs>
        </Frame>
        <DockTab $bottom><ModulePane a="#1f9d62" b="#d84545" />Materiales</DockTab>
      </Center>
      <Rail $right>
        <VerticalTab $right><Tools /><VerticalText>Herramientas - Propiedades</VerticalText></VerticalTab>
      </Rail>
    </Dock>
    <ProjectStatus>
      Seleccionado: (Item Extra) 2.9999 -&gt; Armario (2000x2500x550)
      <Grow />
      <TextButton $strong><Glasses />Mostrar&nbsp;&nbsp;<Caret /></TextButton>
      <TextButton $strong $on><Collision />Colisión</TextButton>
      <TextButton $strong $on><Joint />Acoplamientos</TextButton>
      <TextButton $strong><Lower />Auto Rebajar</TextButton>
      <Tool name="Ajustes"><Wrench /></Tool>
      <SizeGrip />
    </ProjectStatus>
  </Window>
);

export default function App() {
  return (
    <Desktop>
      <GlobalStyle />
      <BuilderWindow />
      <ProjectWindow />
    </Desktop>
  );
}
